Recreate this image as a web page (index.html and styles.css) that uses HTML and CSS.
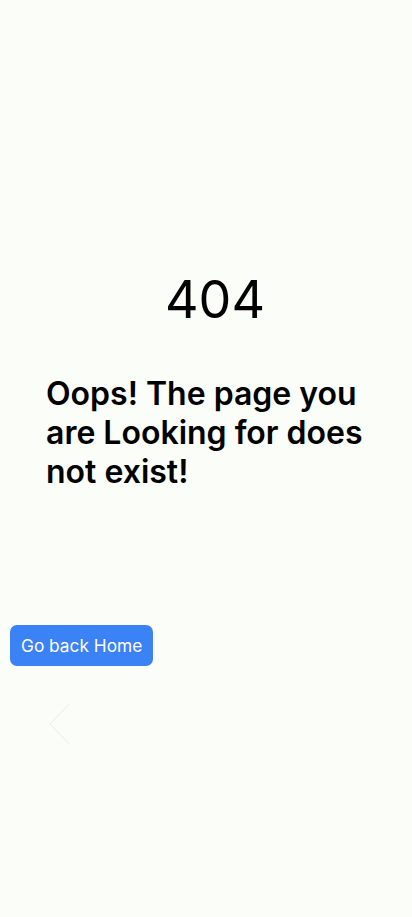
FILE: index.html
```html
<!DOCTYPE html>
<html lang="en">
<head>
<meta charset="utf-8">
<meta name="viewport" content="width=device-width, initial-scale=1">
<title>404</title>
<link rel="stylesheet" href="styles.css">
</head>
<body>
<main class="page">
  <section class="notfound">
    <h1 class="code">404</h1>
    <h2 class="message">Oops! The page you are Looking for does not exist!</h2>
  </section>
  <a class="home-btn" href="#">Go back Home</a>
  <div class="chevron" aria-hidden="true">
    <svg width="22" height="42" viewBox="0 0 22 42"><polyline points="20,1 1,21 20,41" fill="none" stroke="#e9efe4" stroke-width="1"/></svg>
  </div>
</main>
</body>
</html>
```
FILE: styles.css
```css
html, body {
  margin: 0;
  padding: 0;
  background: #fbfdf8;
}
body {
  font-family: Inter, "Noto Sans", sans-serif;
  color: #000;
  min-height: 917px;
}
.page {
  display: flex;
  flex-direction: column;
  padding-top: 268px;
}
.notfound {
  display: flex;
  flex-direction: column;
  align-items: center;
}
.code {
  margin: 0 0 0 18px;
  font-size: 52px;
  font-weight: 400;
  line-height: 64px;
}
.message {
  margin: 42px 0 0 0;
  width: 320px;
  font-size: 32px;
  font-weight: 600;
  line-height: 39px;
}
.home-btn {
  align-self: flex-start;
  margin: 134px 0 0 10px;
  padding: 0 11px;
  height: 41px;
  display: flex;
  align-items: center;
  background: #3b82f6;
  color: #fff;
  border-radius: 7px;
  font-size: 17.3px;
  text-decoration: none;
}
.chevron {
  margin: 37px 0 0 49px;
  width: 22px;
  height: 42px;
}
```
